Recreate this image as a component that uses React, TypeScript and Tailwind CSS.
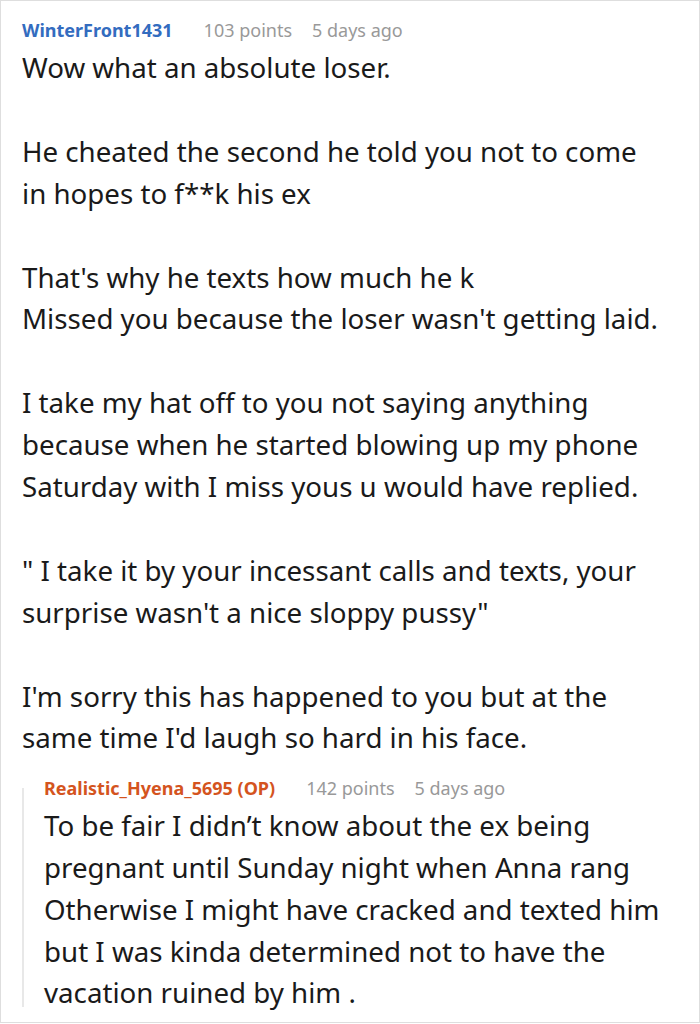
const paragraphs: string[][] = [
  ["Wow what an absolute loser."],
  ["He cheated the second he told you not to come", "in hopes to f**k his ex"],
  ["That's why he texts how much he k", "Missed you because the loser wasn't getting laid."],
  [
    "I take my hat off to you not saying anything",
    "because when he started blowing up my phone",
    "Saturday with I miss yous u would have replied.",
  ],
  [
    "\" I take it by your incessant calls and texts, your",
    "surprise wasn't a nice sloppy pussy\"",
  ],
  ["I'm sorry this has happened to you but at the", "same time I'd laugh so hard in his face."],
]

const reply: string[] = [
  "To be fair I didn’t know about the ex being",
  "pregnant until Sunday night when Anna rang",
  "Otherwise I might have cracked and texted him",
  "but I was kinda determined not to have the",
  "vacation ruined by him .",
]

function Meta({ name, points, color }: { name: string; points: string; color: string }) {
  return (
    <div className="flex items-center h-[28px] text-[18px] leading-[28px]">
      <span className={`font-bold ${color}`}>{name}</span>
      <span className="ml-[31px] text-[#999999]">{points}</span>
      <span className="ml-[20px] text-[#999999]">5 days ago</span>
    </div>
  )
}

export default function App() {
  return (
    <div
      className="w-[700px] h-[1023px] bg-white border border-[#dedede] text-[#1a1a1a] overflow-hidden"
      style={{ fontFamily: '"Noto Sans", "Open Sans", sans-serif' }}
    >
      <div className="pl-[21px] pt-[15px]">
        <Meta name="WinterFront1431" points="103 points" color="text-[#336cbf]" />
        <div className="text-[27.7px] leading-[41.9px] mt-[3px]">
          {paragraphs.map((p, i) => (
            <p key={i} className={i > 0 ? "mt-[41.9px]" : ""}>
              {p.map((line, j) => (
                <span key={j} className="block whitespace-nowrap">
                  {line}
                </span>
              ))}
            </p>
          ))}
        </div>
        <div className="mt-[15px] flex">
          <div className="w-[2px] flex flex-col">
            <div className="mt-[14px] mb-[7px] flex-1 bg-[#e8e8e8]" />
          </div>
          <div className="pl-[20px]">
            <Meta name="Realistic_Hyena_5695 (OP)" points="142 points" color="text-[#d4541e]" />
            <div className="text-[27.7px] leading-[41.75px] mt-[3px]">
              {reply.map((line, j) => (
                <span key={j} className="block whitespace-nowrap">
                  {line}
                </span>
              ))}
            </div>
          </div>
        </div>
      </div>
    </div>
  )
}
